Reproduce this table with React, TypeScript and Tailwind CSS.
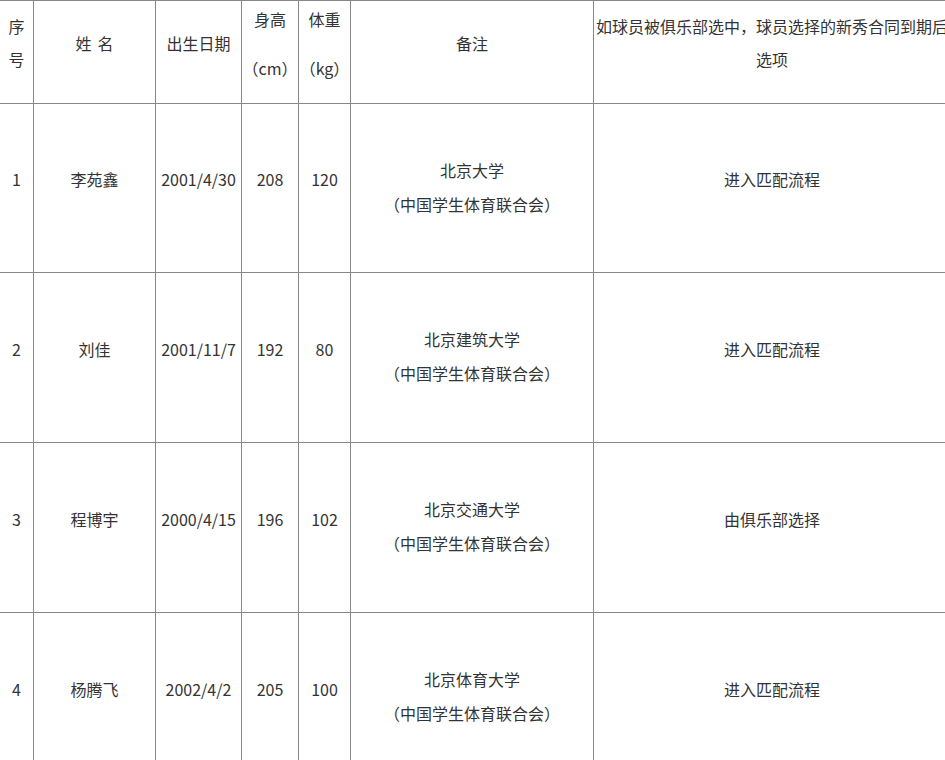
import React from 'react';

interface Player {
  no: number;
  name: string;
  birth: string;
  height: number;
  weight: number;
  school: string;
  option: string;
}

const players: Player[] = [
  { no: 1, name: '李苑鑫', birth: '2001/4/30', height: 208, weight: 120, school: '北京大学', option: '进入匹配流程' },
  { no: 2, name: '刘佳', birth: '2001/11/7', height: 192, weight: 80, school: '北京建筑大学', option: '进入匹配流程' },
  { no: 3, name: '程博宇', birth: '2000/4/15', height: 196, weight: 102, school: '北京交通大学', option: '由俱乐部选择' },
  { no: 4, name: '杨腾飞', birth: '2002/4/2', height: 205, weight: 100, school: '北京体育大学', option: '进入匹配流程' },
];

const cell = 'border-r border-b border-[#888] align-middle text-center font-normal p-0 pb-[3px]';

function Line({ children }: { children: React.ReactNode }) {
  return <p className="leading-[34px] mb-[15px]">{children}</p>;
}

export default function App() {
  return (
    <div
      className="w-[945px] h-[760px] overflow-hidden bg-white text-[16px] text-[#333]"
      style={{ fontFamily: '"Noto Sans CJK SC", "Noto Sans", sans-serif' }}
    >
      <table className="w-[951px] table-fixed border-separate border-spacing-0">
        <colgroup>
          <col className="w-[34px]" />
          <col className="w-[122px]" />
          <col className="w-[86px]" />
          <col className="w-[57px]" />
          <col className="w-[52px]" />
          <col className="w-[243px]" />
          <col className="w-[357px]" />
        </colgroup>
        <thead>
          <tr className="h-[104px]">
            <th className={`${cell} border-t px-[5px]`}>
              <p className="leading-[33px] mb-[15px]">序号</p>
            </th>
            <th className={`${cell} border-t`}>
              <Line>
                姓<span className="ml-[6px]">名</span>
              </Line>
            </th>
            <th className={`${cell} border-t`}>
              <Line>出生日期</Line>
            </th>
            <th className={`${cell} border-t`}>
              <Line>身高</Line>
              <Line>（cm）</Line>
            </th>
            <th className={`${cell} border-t`}>
              <Line>体重</Line>
              <Line>（kg）</Line>
            </th>
            <th className={`${cell} border-t`}>
              <Line>备注</Line>
            </th>
            <th className={`${cell} border-t px-[1px]`}>
              <p className="leading-[33px] mb-[15px]">如球员被俱乐部选中，球员选择的新秀合同到期后选项</p>
            </th>
          </tr>
        </thead>
        <tbody>
          {players.map((p, i) => (
            <tr key={p.no} className={i === 0 ? 'h-[169px]' : 'h-[170px]'}>
              <td className={cell}>
                <Line>{p.no}</Line>
              </td>
              <td className={cell}>
                <Line>{p.name}</Line>
              </td>
              <td className={cell}>
                <Line>{p.birth}</Line>
              </td>
              <td className={cell}>
                <Line>{p.height}</Line>
              </td>
              <td className={cell}>
                <Line>{p.weight}</Line>
              </td>
              <td className={cell}>
                <p className="leading-[34px]">
                  {p.school}
                  <br />
                  （中国学生体育联合会）
                </p>
              </td>
              <td className={cell}>
                <Line>{p.option}</Line>
              </td>
            </tr>
          ))}
        </tbody>
      </table>
    </div>
  );
}
